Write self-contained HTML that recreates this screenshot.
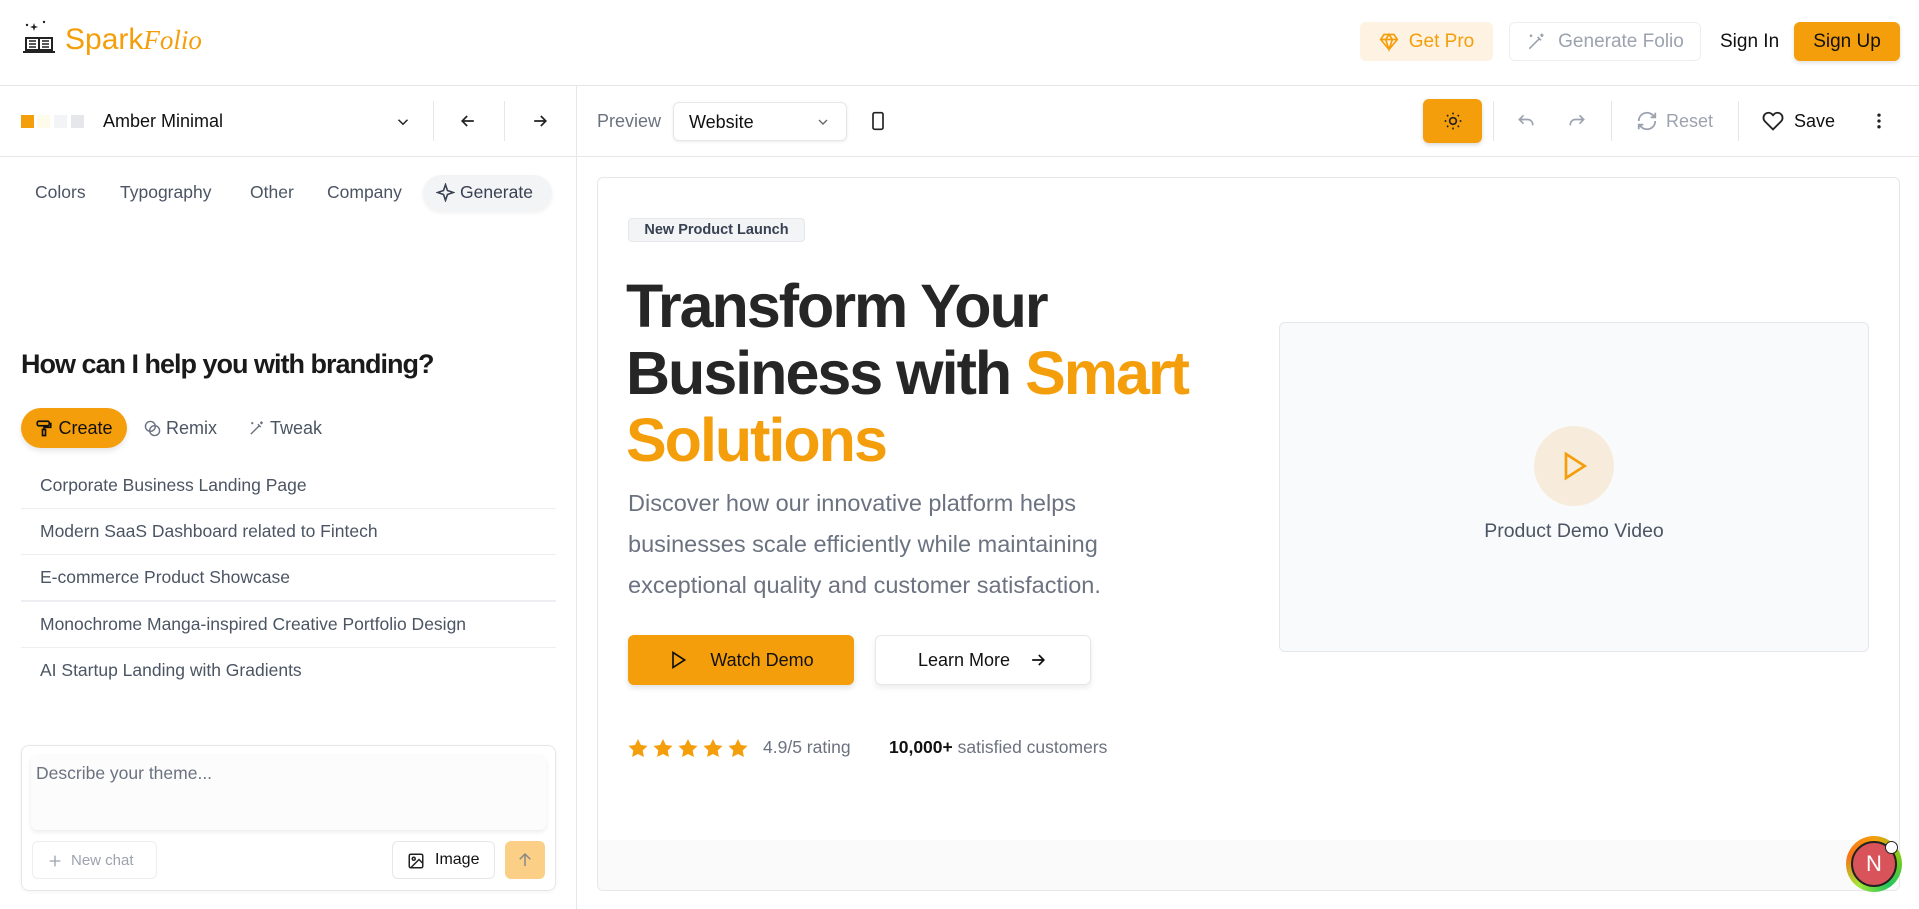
<!DOCTYPE html>
<html><head><meta charset="utf-8"><style>
*{box-sizing:border-box;margin:0;padding:0}
body{width:1919px;height:909px;overflow:hidden;background:#fff;font-family:"Liberation Sans",Arial,sans-serif;color:#1f2937;position:relative}
.a{position:absolute}
.hl{position:absolute;left:0;right:0;height:1px;background:#e5e7eb}
.vl{position:absolute;width:1px;background:#e5e7eb}
svg{display:block}
.btn{position:absolute;display:flex;align-items:center;justify-content:center;border-radius:6px;font-size:19px}
.li{position:absolute;left:40px;font-size:17.5px;color:#4b5563}
.sep{position:absolute;left:21px;width:535px;height:1px;background:#eceef1}
</style></head><body>

<!-- header -->
<svg class="a" style="left:22px;top:20px" width="34" height="36" viewBox="0 0 34 36"><path d="M12 3l1 3 3 1-3 1-1 3-1-3-3-1 3-1z" fill="#222"/><circle cx="5" cy="5" r="1.2" fill="#222"/><circle cx="22" cy="2" r="1.2" fill="#222"/><path d="M3 17h28v14H3z" fill="#222"/><path d="M5 19h11v10H5zM18 19h11v10H18z" fill="#fff"/><path d="M7 21h7M7 24h7M7 27h7M20 21h7M20 24h7M20 27h7" stroke="#222" stroke-width="1.4"/><path d="M1 32h32" stroke="#222" stroke-width="2"/></svg>
<div class="a" style="left:65px;top:22px;font-size:30px;color:#f59e0b;line-height:36px">Spark<span style="font-family:'Liberation Serif',serif;font-style:italic;font-size:27px">Folio</span></div>

<div class="btn" style="left:1360px;top:22px;width:133px;height:39px;background:#fef3e2;color:#f59e0b">
<svg width="20" height="20" viewBox="0 0 24 24" fill="none" stroke="#f59e0b" stroke-width="2" style="margin-right:10px"><path d="M6 3h12l4 6-10 12L2 9z M2 9h20 M12 21L8 9l4-6 4 6z"/></svg>Get Pro</div>
<div class="btn" style="left:1509px;top:22px;width:192px;height:39px;border:1px solid #eceef0;color:#9ca3af">
<svg width="20" height="20" viewBox="0 0 24 24" fill="none" stroke="#9ca3af" stroke-width="2" style="margin-right:12px"><path d="M4 20L16 8M14 6l4 4M19 2v4M17 4h4M6 3v3M4.5 4.5h3"/></svg>Generate Folio</div>
<div class="a" style="left:1720px;top:31px;font-size:19px;color:#111">Sign In</div>
<div class="btn" style="left:1794px;top:22px;width:106px;height:39px;background:#f59e0b;color:#111;box-shadow:0 2px 4px rgba(0,0,0,.12)">Sign Up</div>

<div class="hl" style="top:85px"></div>
<!-- toolbar -->
<div class="a" style="left:21px;top:115px;width:13px;height:13px;background:#f59e0b"></div>
<div class="a" style="left:37px;top:115px;width:13px;height:13px;background:#fefbea"></div>
<div class="a" style="left:54px;top:115px;width:13px;height:13px;background:#f3f4f6"></div>
<div class="a" style="left:71px;top:115px;width:13px;height:13px;background:#e5e7eb"></div>
<div class="a" style="left:103px;top:111px;font-size:18px;color:#111">Amber Minimal</div>
<svg class="a" style="left:394px;top:113px" width="18" height="18" viewBox="0 0 24 24" fill="none" stroke="#222" stroke-width="2"><path d="M6 9l6 6 6-6"/></svg>
<div class="vl" style="left:433px;top:101px;height:40px"></div>
<svg class="a" style="left:458px;top:111px" width="20" height="20" viewBox="0 0 24 24" fill="none" stroke="#222" stroke-width="2"><path d="M19 12H5M11 6l-6 6 6 6"/></svg>
<div class="vl" style="left:504px;top:101px;height:40px"></div>
<svg class="a" style="left:530px;top:111px" width="20" height="20" viewBox="0 0 24 24" fill="none" stroke="#222" stroke-width="2"><path d="M5 12h14M13 6l6 6-6 6"/></svg>
<div class="vl" style="left:576px;top:86px;height:823px"></div>

<div class="a" style="left:597px;top:111px;font-size:18px;color:#6b7280">Preview</div>
<div class="a" style="left:673px;top:102px;width:174px;height:39px;border:1px solid #e5e7eb;border-radius:6px;box-shadow:0 1px 3px rgba(0,0,0,.08)"><span class="a" style="left:15px;top:9px;font-size:18px;color:#111">Website</span><svg class="a" style="left:141px;top:11px" width="16" height="16" viewBox="0 0 24 24" fill="none" stroke="#666" stroke-width="2"><path d="M6 9l6 6 6-6"/></svg></div>
<svg class="a" style="left:868px;top:110px" width="20" height="22" viewBox="0 0 24 24" fill="none" stroke="#222" stroke-width="2"><rect x="6" y="2" width="12" height="20" rx="2"/><path d="M12 18h.01"/></svg>

<div class="btn" style="left:1423px;top:99px;width:59px;height:44px;background:#f59e0b;box-shadow:0 2px 4px rgba(0,0,0,.15)"><svg width="20" height="20" viewBox="0 0 24 24" fill="none" stroke="#222" stroke-width="2"><circle cx="12" cy="12" r="4"/><path d="M12 2v2M12 20v2M4.9 4.9l1.4 1.4M17.7 17.7l1.4 1.4M2 12h2M20 12h2M4.9 19.1l1.4-1.4M17.7 6.3l1.4-1.4"/></svg></div>
<div class="vl" style="left:1493px;top:101px;height:40px"></div>
<svg class="a" style="left:1516px;top:112px" width="20" height="20" viewBox="0 0 24 24" fill="none" stroke="#9ca3af" stroke-width="2"><path d="M9 14L4 9l5-5M4 9h10a6 6 0 016 6v1"/></svg>
<svg class="a" style="left:1567px;top:112px" width="20" height="20" viewBox="0 0 24 24" fill="none" stroke="#9ca3af" stroke-width="2"><path d="M15 14l5-5-5-5M20 9H10a6 6 0 00-6 6v1"/></svg>
<div class="vl" style="left:1611px;top:101px;height:40px"></div>
<svg class="a" style="left:1636px;top:110px" width="22" height="22" viewBox="0 0 24 24" fill="none" stroke="#9ca3af" stroke-width="2"><path d="M3 12a9 9 0 0115-6.7L21 8M21 3v5h-5M21 12a9 9 0 01-15 6.7L3 16M3 21v-5h5"/></svg>
<div class="a" style="left:1666px;top:111px;font-size:18px;color:#9ca3af">Reset</div>
<div class="vl" style="left:1738px;top:101px;height:40px"></div>
<svg class="a" style="left:1762px;top:110px" width="22" height="22" viewBox="0 0 24 24" fill="none" stroke="#222" stroke-width="2"><path d="M20.8 4.6a5.5 5.5 0 00-7.8 0L12 5.7l-1-1.1a5.5 5.5 0 00-7.8 7.8l8.8 8.8 8.8-8.8a5.5 5.5 0 000-7.8z"/></svg>
<div class="a" style="left:1794px;top:111px;font-size:18px;color:#111">Save</div>
<svg class="a" style="left:1869px;top:111px" width="20" height="20" viewBox="0 0 24 24" fill="#222"><circle cx="12" cy="5" r="2"/><circle cx="12" cy="12" r="2"/><circle cx="12" cy="19" r="2"/></svg>
<div class="hl" style="top:156px"></div>

<!-- left panel -->
<div class="a" style="left:35px;top:182px;font-size:17.5px;color:#4b5563">Colors</div>
<div class="a" style="left:120px;top:182px;font-size:17.5px;color:#4b5563">Typography</div>
<div class="a" style="left:250px;top:182px;font-size:17.5px;color:#4b5563">Other</div>
<div class="a" style="left:327px;top:182px;font-size:17.5px;color:#4b5563">Company</div>
<div class="a" style="left:423px;top:175px;width:129px;height:36px;border-radius:18px;background:#f3f4f6;box-shadow:0 2px 4px rgba(0,0,0,.06)"></div>
<svg class="a" style="left:436px;top:183px" width="19" height="19" viewBox="0 0 24 24" fill="none" stroke="#374151" stroke-width="2"><path d="M12 2l2.5 7.5L22 12l-7.5 2.5L12 22l-2.5-7.5L2 12l7.5-2.5z"/></svg>
<div class="a" style="left:460px;top:182px;font-size:17.5px;color:#374151">Generate</div>

<div class="a" style="left:21px;top:349px;font-size:27px;font-weight:bold;color:#1a1a1a;letter-spacing:-1px">How can I help you with branding?</div>
<div class="btn" style="left:21px;top:408px;width:106px;height:40px;border-radius:20px;background:#f59e0b;color:#111;font-size:18px;box-shadow:0 3px 6px rgba(0,0,0,.1)"><svg width="18" height="18" viewBox="0 0 24 24" fill="none" stroke="#111" stroke-width="2.2" style="margin-right:5px"><rect x="3" y="3" width="16" height="6" rx="2"/><path d="M19 6h2v5h-9v3M10 14h4v8h-4z"/></svg>Create</div>
<svg class="a" style="left:144px;top:420px" width="17" height="17" viewBox="0 0 24 24" fill="none" stroke="#6b7280" stroke-width="2"><circle cx="9" cy="9" r="7"/><circle cx="15" cy="15" r="7"/></svg>
<div class="a" style="left:166px;top:418px;font-size:18px;color:#4b5563">Remix</div>
<svg class="a" style="left:248px;top:420px" width="17" height="17" viewBox="0 0 24 24" fill="none" stroke="#6b7280" stroke-width="2"><path d="M4 20L16 8M14 6l4 4M19 2v4M17 4h4M6 3v3M4.5 4.5h3"/></svg>
<div class="a" style="left:270px;top:418px;font-size:18px;color:#4b5563">Tweak</div>

<div class="li" style="top:475px">Corporate Business Landing Page</div>
<div class="sep" style="top:508px"></div>
<div class="li" style="top:521px">Modern SaaS Dashboard related to Fintech</div>
<div class="sep" style="top:554px"></div>
<div class="li" style="top:567px">E-commerce Product Showcase</div>
<div class="sep" style="top:600px;height:2px"></div>
<div class="li" style="top:614px">Monochrome Manga-inspired Creative Portfolio Design</div>
<div class="sep" style="top:647px"></div>
<div class="li" style="top:660px">AI Startup Landing with Gradients</div>

<div class="a" style="left:21px;top:745px;width:535px;height:146px;border:1px solid #e5e7eb;border-radius:8px;box-shadow:0 1px 4px rgba(0,0,0,.05)"></div>
<div class="a" style="left:31px;top:755px;width:515px;height:75px;border-radius:6px;background:#fcfcfc;box-shadow:0 2px 5px rgba(0,0,0,.08)"><span class="a" style="left:5px;top:8px;font-size:17.5px;color:#6b7280">Describe your theme...</span></div>
<div class="a" style="left:32px;top:841px;width:125px;height:38px;border:1px solid #eceef0;border-radius:6px"><svg class="a" style="left:14px;top:11px" width="16" height="16" viewBox="0 0 24 24" fill="none" stroke="#9ca3af" stroke-width="2"><path d="M12 4v16M4 12h16"/></svg><span class="a" style="left:38px;top:10px;font-size:15px;color:#9ca3af">New chat</span></div>
<div class="a" style="left:392px;top:841px;width:103px;height:38px;border:1px solid #e5e7eb;border-radius:6px"><svg class="a" style="left:14px;top:10px" width="18" height="18" viewBox="0 0 24 24" fill="none" stroke="#222" stroke-width="2"><rect x="3" y="3" width="18" height="18" rx="2"/><circle cx="9" cy="9" r="2"/><path d="M21 15l-5-5L5 21"/></svg><span class="a" style="left:42px;top:9px;font-size:16px;color:#111">Image</span></div>
<div class="btn" style="left:505px;top:841px;width:40px;height:38px;background:#fbcf85"><svg width="18" height="18" viewBox="0 0 24 24" fill="none" stroke="#888" stroke-width="2"><path d="M12 20V4M5 11l7-7 7 7"/></svg></div>

<!-- preview card -->
<div class="a" style="left:597px;top:177px;width:1303px;height:714px;border:1px solid #e5e7eb;border-radius:6px;overflow:hidden">
<div class="a" style="left:0;right:0;top:662px;bottom:0;background:#fafafa"></div>
</div>
<div class="a" style="left:628px;top:218px;width:177px;height:24px;background:#f3f4f6;border:1px solid #e5e7eb;border-radius:4px;font-size:14.5px;font-weight:bold;color:#374151;text-align:center;line-height:22px">New Product Launch</div>
<div class="a" style="left:626px;top:273px;font-size:61px;font-weight:bold;line-height:67px;color:#262626;letter-spacing:-2px">Transform Your<br>Business with <span style="color:#f59e0b">Smart</span><br><span style="color:#f59e0b">Solutions</span></div>
<div class="a" style="left:628px;top:483px;width:545px;font-size:23.5px;line-height:41px;color:#6b7280">Discover how our innovative platform helps businesses scale efficiently while maintaining exceptional quality and customer satisfaction.</div>
<div class="btn" style="left:628px;top:635px;width:226px;height:50px;background:#f59e0b;color:#111;font-size:18px;box-shadow:0 3px 6px rgba(0,0,0,.12)"><svg width="20" height="20" viewBox="0 0 24 24" fill="none" stroke="#111" stroke-width="2" style="margin-right:22px"><path d="M6 3l14 9-14 9z"/></svg>Watch Demo</div>
<div class="btn" style="left:875px;top:635px;width:216px;height:50px;border:1px solid #e5e7eb;color:#111;font-size:18px;box-shadow:0 3px 6px rgba(0,0,0,.08)">Learn More<svg width="20" height="20" viewBox="0 0 24 24" fill="none" stroke="#111" stroke-width="2" style="margin-left:18px"><path d="M5 12h14M13 6l6 6-6 6"/></svg></div>
<svg class="a" style="left:628px;top:738px" width="122" height="20" viewBox="0 0 122 20"><g fill="#f59e0b"><path id="s" d="M10 1l2.9 6 6.6.9-4.8 4.6 1.2 6.5L10 16l-5.9 3 1.2-6.5L.5 7.9 7.1 7z"/><use href="#s" x="25"/><use href="#s" x="50"/><use href="#s" x="75"/><use href="#s" x="100"/></g></svg>
<div class="a" style="left:763px;top:737px;font-size:17.5px;color:#6b7280">4.9/5 rating</div>
<div class="a" style="left:889px;top:737px;font-size:17.5px;color:#6b7280"><b style="color:#111">10,000+</b> satisfied customers</div>

<div class="a" style="left:1279px;top:322px;width:590px;height:330px;background:#f9fafb;border:1px solid #e5e7eb;border-radius:6px"></div>
<div class="a" style="left:1534px;top:426px;width:80px;height:80px;border-radius:50%;background:#f7ecdb"></div>
<svg class="a" style="left:1558px;top:450px" width="32" height="32" viewBox="0 0 24 24" fill="none" stroke="#f59e0b" stroke-width="2"><path d="M6 3l14 9-14 9z"/></svg>
<div class="a" style="left:1279px;top:520px;width:590px;text-align:center;font-size:19.5px;color:#4b5563">Product Demo Video</div>

<!-- avatar -->
<div class="a" style="left:1846px;top:836px;width:56px;height:56px;border-radius:50%;background:conic-gradient(#f59e0b,#84cc16,#22c55e,#a3e635,#f97316,#f59e0b)"></div>
<div class="a" style="left:1851px;top:841px;width:46px;height:46px;border-radius:50%;background:#d9545a;border:2px solid #222;color:#fff;font-size:22px;text-align:center;line-height:42px">N</div>
<div class="a" style="left:1885px;top:841px;width:13px;height:13px;border-radius:50%;background:#fff;border:1.5px solid #222"></div>
</body></html>
